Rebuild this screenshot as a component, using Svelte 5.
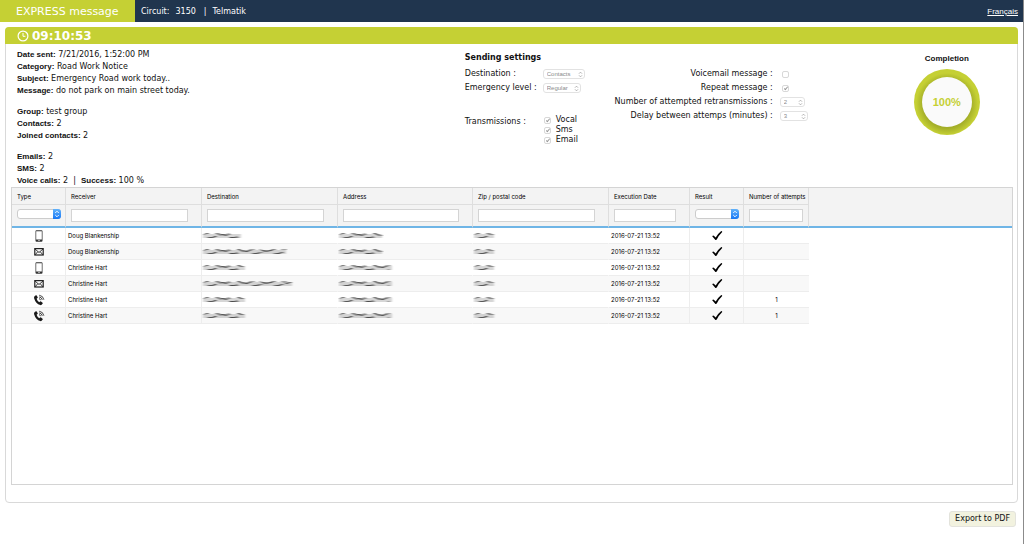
<script>
  const columns = [
    { name: 'Type', width: 54, kind: 'select' },
    { name: 'Receiver', width: 136, kind: 'text' },
    { name: 'Destination', width: 136, kind: 'text' },
    { name: 'Address', width: 135, kind: 'text' },
    { name: 'Zip / postal code', width: 136, kind: 'text' },
    { name: 'Execution Date', width: 81, kind: 'text' },
    { name: 'Result', width: 54, kind: 'select' },
    { name: 'Number of attempts', width: 65, kind: 'text' }
  ];
  const rows = [
    { type: 'sms', receiver: 'Doug Blankenship', masks: [41, 46, 23], attempts: '' },
    { type: 'mail', receiver: 'Doug Blankenship', masks: [86, 46, 23], attempts: '' },
    { type: 'sms', receiver: 'Christine Hart', masks: [45, 56, 23], attempts: '' },
    { type: 'mail', receiver: 'Christine Hart', masks: [92, 56, 23], attempts: '' },
    { type: 'call', receiver: 'Christine Hart', masks: [45, 56, 23], attempts: '1' },
    { type: 'call', receiver: 'Christine Hart', masks: [45, 56, 23], attempts: '1' }
  ];
  const groups = [
    [['Date sent', '7/21/2016, 1:52:00 PM'], ['Category', 'Road Work Notice'], ['Subject', 'Emergency Road work today..'], ['Message', 'do not park on main street today.']],
    [['Group', 'test group'], ['Contacts', '2'], ['Joined contacts', '2']],
    [['Emails', '2'], ['SMS', '2']]
  ];
  const levels = [2, 5, 3, 1, 4, 2, 5, 1, 3, 5, 2];
  const strokes = (w) => Array.from({ length: Math.floor(w / 2) - 1 }, (_, i) => ({
    x: 1 + i * 2,
    y: levels[(i * 3) % 11],
    w: 3 + ((i * 5) % 4),
    o: 0.3 + ((i * 7) % 4) * 0.1
  }));
</script>

{#snippet arrows()}
  <svg class="arrows" viewBox="0 0 6 8" aria-hidden="true"><path d="M1.2 3 3 1.2 4.8 3M1.2 5 3 6.8 4.8 5" fill="none" stroke="currentColor" stroke-width=".9" /></svg>
{/snippet}

<div class="page">
  <header>
    <div class="brand">EXPRESS message</div>
    <div class="circuit"><span>Circuit:</span><span>3150</span><span class="bar">|</span><span>Telmatik</span></div>
    <a href="#fr">Français</a>
  </header>

  <main>
    <div class="clock">
      <svg viewBox="0 0 12 12" aria-hidden="true"><circle cx="6" cy="6" r="4.9" fill="none" stroke="#fff" stroke-width="1.2" /><path d="M6 3v3.3h2.4" fill="none" stroke="#fff" stroke-width="1" /></svg>
      <span>09:10:53</span>
    </div>

    <section class="summary">
      <div class="info">
        {#each groups as group, g}
          <div class="group">
            {#each group as [label, value]}
              <div><b>{label}:</b> {value}</div>
            {/each}
            {#if g === 2}
              <div><b>Voice calls:</b> 2 &nbsp;|&nbsp; <b>Success:</b> 100 %</div>
            {/if}
          </div>
        {/each}
      </div>

      <div class="settings">
        <h2>Sending settings</h2>
        <div class="pair">
          <div class="left">
            <label for="dest">Destination :</label>
            <span class="pick w42"><select id="dest" disabled><option>Contacts</option></select>{@render arrows()}</span>
            <label for="level">Emergency level :</label>
            <span class="pick w38"><select id="level" disabled><option>Regular</option></select>{@render arrows()}</span>
            <span class="trans">Transmissions :</span>
            <div class="checks">
              {#each ['Vocal', 'Sms', 'Email'] as name}
                <label><input type="checkbox" checked disabled />{name}</label>
              {/each}
            </div>
          </div>
          <div class="right">
            <label for="voicemail">Voicemail message :</label>
            <input class="tick" id="voicemail" type="checkbox" disabled />
            <label for="repeat">Repeat message :</label>
            <input class="tick" id="repeat" type="checkbox" checked disabled />
            <label for="tries">Number of attempted retransmissions :</label>
            <span class="pick w25"><select id="tries" disabled><option>2</option></select>{@render arrows()}</span>
            <label for="delay">Delay between attemps (minutes) :</label>
            <span class="pick w28"><select id="delay" disabled><option>3</option></select>{@render arrows()}</span>
          </div>
        </div>
      </div>

      <div class="completion">
        <h3>Completion</h3>
        <div class="ring"><div class="core">100%</div></div>
      </div>
    </section>

    <div class="grid">
      <table>
        <colgroup>
          {#each columns as c}<col style="width: {c.width}px" />{/each}
          <col />
        </colgroup>
        <thead>
          <tr class="names">
            {#each columns as c}<th scope="col">{c.name}</th>{/each}
            <td></td>
          </tr>
          <tr class="filters">
            {#each columns as c}
              <td>
                {#if c.kind === 'select'}
                  <span class="filter-pick"><select aria-label={c.name}><option></option></select><span class="cap">{@render arrows()}</span></span>
                {:else}
                  <input type="text" aria-label={c.name} />
                {/if}
              </td>
            {/each}
            <td></td>
          </tr>
        </thead>
        <tbody>
          {#each rows as r}
            <tr>
              <td class="mid">
                {#if r.type === 'sms'}
                  <svg class="icon" viewBox="0 0 12 12" aria-hidden="true"><path fill="#333" fill-rule="evenodd" d="M3.500.3h5q1 0 1 1v9.400q0 1-1 1h-5q-1 0-1-1V1.300q0-1 1-1ZM3.200 1.200v8.400h5.600V1.200ZM5.300 10.300v.7h1.400v-.7Z" /></svg>
                {:else if r.type === 'mail'}
                  <svg class="icon" viewBox="0 0 12 12" aria-hidden="true"><rect x="1.800" y="2.600" width="8.400" height="6.400" fill="none" stroke="#222" stroke-width="1.200" /><path d="m2 3 4 3.500L10 3M2 8.900l2.800-3.200M10 8.900 7.200 5.700" fill="none" stroke="#222" stroke-width=".9" /></svg>
                {:else}
                  <svg class="icon" viewBox="0 0 12 12" aria-hidden="true"><path fill="#1a1a1a" d="M1.500 2.200 2.900 1.200q.5-.2.8.2l1 1.800q.2.5-.2.800l-.9.800Q4.300 7 6.200 8.200l.9-.7q.5-.3.900 0l1.600 1.200q.4.400.1.800l-1.100 1.300q-.5.500-1.300.3Q2.700 9.700 1.100 4.200q-.3-1.200.4-2Z" /><path d="M6 4.600q1.300.2 1.600 1.600M6.100 2.900q2.600.4 3.200 3M6.200 1.200q4 .6 4.700 4.500" fill="none" stroke="#1a1a1a" stroke-width=".8" /></svg>
                {/if}
              </td>
              <td>{r.receiver}</td>
              {#each r.masks as w}
                <td class="masked">
                  <svg width={w} height="8" viewBox="0 0 {w} 8" aria-hidden="true">
                    <g filter="url(#smear)">
                      <rect x="1" y="2" width={w - 3} height="4" fill="#999" opacity=".4" />
                      {#each strokes(w - 4) as s}
                        <rect x={s.x} y={s.y} width={s.w} height="1" fill="#222" opacity={s.o} />
                      {/each}
                    </g>
                  </svg>
                </td>
              {/each}
              <td>2016-07-21 13:52</td>
              <td class="mid"><svg class="icon" viewBox="0 0 12 12" role="img" aria-label="Success"><path fill="#000" d="M1.200 6.200q.9-1.200 1.900-.3L4.700 7.500Q6.800 3.800 10 1.300q.6-.4 1.100.1.300.4-.1.900-3.100 3-5.100 7-.4.700-1 .7-.6 0-.9-.5Z" /></svg></td>
              <td class="mid">{r.attempts}</td>
              <td></td>
            </tr>
          {/each}
        </tbody>
      </table>
    </div>
  </main>

  <footer><button type="button">Export to PDF</button></footer>
  <svg class="defs" aria-hidden="true"><filter id="smear" x="-10%" y="-20%" width="120%" height="140%"><feGaussianBlur stdDeviation="1 .4" /></filter></svg>
</div>

<style>
  :global(body) { margin: 0; background: #fff; }
  * { box-sizing: border-box; }
  .page { min-height: 100vh; border-right: 1px solid #8b8b8b; font: 8px/12px "DejaVu Sans", Verdana, sans-serif; color: #111; }
  header { display: flex; align-items: stretch; height: 22px; background: #20354e; color: #fff; line-height: 22px; }
  .brand { width: 135px; padding-left: 16px; background: #c5d034; font-size: 11px; line-height: 24px; height: 22px; white-space: nowrap; }
  .circuit { display: flex; gap: 6px; padding-left: 6px; flex: 1; line-height: 23px; }
  .bar { padding: 0 0 0 2px; }
  header a { padding-right: 5px; color: #fff; font: 8px/23px "Liberation Sans", Arial, sans-serif; }
  main { margin: 5px 5px 0; border: 1px solid #d9d9d9; border-radius: 4px; padding-bottom: 17px; }
  .clock { display: flex; align-items: center; gap: 3px; height: 17px; margin: -1px -1px 0; padding-left: 12px; background: #c5d034; color: #fff; border-radius: 4px 4px 0 0; font-weight: bold; font-size: 12px; line-height: 20px; }
  .clock svg { width: 12px; height: 12px; }
  .summary { display: grid; grid-template-columns: 450fr 419fr 131fr; height: 143px; padding: 5px 5px 0 11px; }
  .info { display: flex; flex-direction: column; gap: 9px; white-space: nowrap; }
  b, h3 { font-family: "Liberation Sans", Arial, sans-serif; font-weight: bold; }
  h2, h3 { margin: 0; }
  h2 { font-size: 8px; line-height: 18px; }
  h3 { font-size: 8px; line-height: 20px; }
  .pair { display: flex; }
  .left { display: grid; grid-template-columns: 78px 60px; grid-auto-rows: 14px; align-items: center; white-space: nowrap; }
  .trans { grid-row: 4; padding-top: 12px; }
  .checks { grid-row: 4; display: flex; flex-direction: column; padding-top: 28px; }
  .checks label { display: flex; align-items: center; gap: 5px; line-height: 10px; margin-left: 1px; }
  .right { display: grid; grid-template-columns: 170px 28px; grid-auto-rows: 14px; align-items: center; column-gap: 7px; white-space: nowrap; }
  .right label { text-align: right; }
  input[type="checkbox"] { appearance: none; width: 7px; height: 7px; margin: 0; border: 1px solid #d8d8d8; border-radius: 2px; background: #fff; position: relative; }
  input[type="checkbox"]:checked::before { content: ""; position: absolute; left: 2px; top: 0; width: 1px; height: 3px; border: solid #999; border-width: 0 1px 1px 0; transform: rotate(40deg); }
  input.tick { margin-left: 2px; }
  .pick { position: relative; display: block; height: 10px; color: #999; }
  .pick select { appearance: none; display: block; width: 100%; height: 10px; padding: 0 0 0 3px; border: 1px solid #e2e2e2; border-radius: 3px; background: #fff; color: #8a8a8a; font: 6px/8px "Liberation Sans", Arial, sans-serif; opacity: 1; }
  .pick .arrows { position: absolute; right: 2px; top: 2px; width: 5px; height: 7px; }
  .w42 { width: 42px; } .w38 { width: 38px; } .w25 { width: 25px; } .w28 { width: 28px; }
  .completion { display: flex; flex-direction: column; align-items: center; }
  .ring { width: 66px; height: 66px; padding: 8px; border-radius: 50%; background: radial-gradient(circle at 50% 53%, #a3ae28 24px, #c5d034 31px); }
  .core { height: 50px; border-radius: 50%; background: #fafafa; color: #c5d034; text-align: center; font: bold 11px/50px "Liberation Sans", Arial, sans-serif; }
  .grid { height: 298px; margin: 0 4px 0 5px; border: 1px solid #d4d4d4; }
  table { width: 100%; table-layout: fixed; border-collapse: separate; border-spacing: 0; font: 6px/8px Inter, "DejaVu Sans", sans-serif; color: #000; }
  th, td { padding: 0; text-align: left; font-weight: normal; white-space: nowrap; }
  thead th, thead td { background: #f3f3f3; border-right: 1px solid #dedede; border-bottom: 1px solid #dedede; padding-left: 5px; }
  thead td:last-child { border-right: 0; }
  .names td:last-child { border-bottom-color: #f3f3f3; }
  .names > * { height: 17px; }
  .names > th { padding-top: 2px; }
  .filters > td { height: 23px; border-bottom: 2px solid #6fb5e6; padding-right: 13px; }
  .filters > td:nth-child(1), .filters > td:nth-child(7) { padding: 0 4px 3px 5px; }
  .filters > td:nth-child(8) { padding-right: 5px; }
  .filters input { display: block; width: 100%; height: 13px; border: 1px solid #d4d4d4; background: #fff; padding: 0 2px; font-size: 6px; }
  .filter-pick { position: relative; display: block; height: 10px; }
  .filter-pick select { appearance: none; display: block; width: 100%; height: 10px; border: 1px solid #ccc; border-radius: 3px; background: #fff; padding: 0; font-size: 6px; }
  .cap { position: absolute; top: 0; right: 0; display: flex; align-items: center; justify-content: center; width: 8px; height: 10px; border-radius: 0 3px 3px 0; background: linear-gradient(#62b2fa, #1677f5); color: #fff; pointer-events: none; }
  .cap .arrows { width: 6px; height: 8px; }
  tbody td { height: 16px; padding-left: 2px; border-right: 1px solid #ededed; border-bottom: 1px solid #ededed; }
  tbody td:nth-child(8) { border-right: 0; }
  tbody tr td:last-child { border: 0; background: #fff; }
  tbody tr:nth-child(even) td:not(:last-child) { background: #f8f8f8; }
  tbody td.mid { padding: 0; text-align: center; }
  tbody td.masked { padding-left: 0; border-right-color: transparent; }
  .icon { display: block; width: 12px; height: 12px; margin: 0 auto; }
  .masked svg { display: block; }
  footer { display: flex; justify-content: flex-end; padding: 8px 7px 0; }
  button { height: 16px; padding: 0 5px; border: 1px solid #e3e3dc; border-radius: 3px; background: #f2f2df; color: #111; font: 8px/14px "DejaVu Sans", Verdana, sans-serif; }
  .defs { position: absolute; width: 0; height: 0; }
</style>
